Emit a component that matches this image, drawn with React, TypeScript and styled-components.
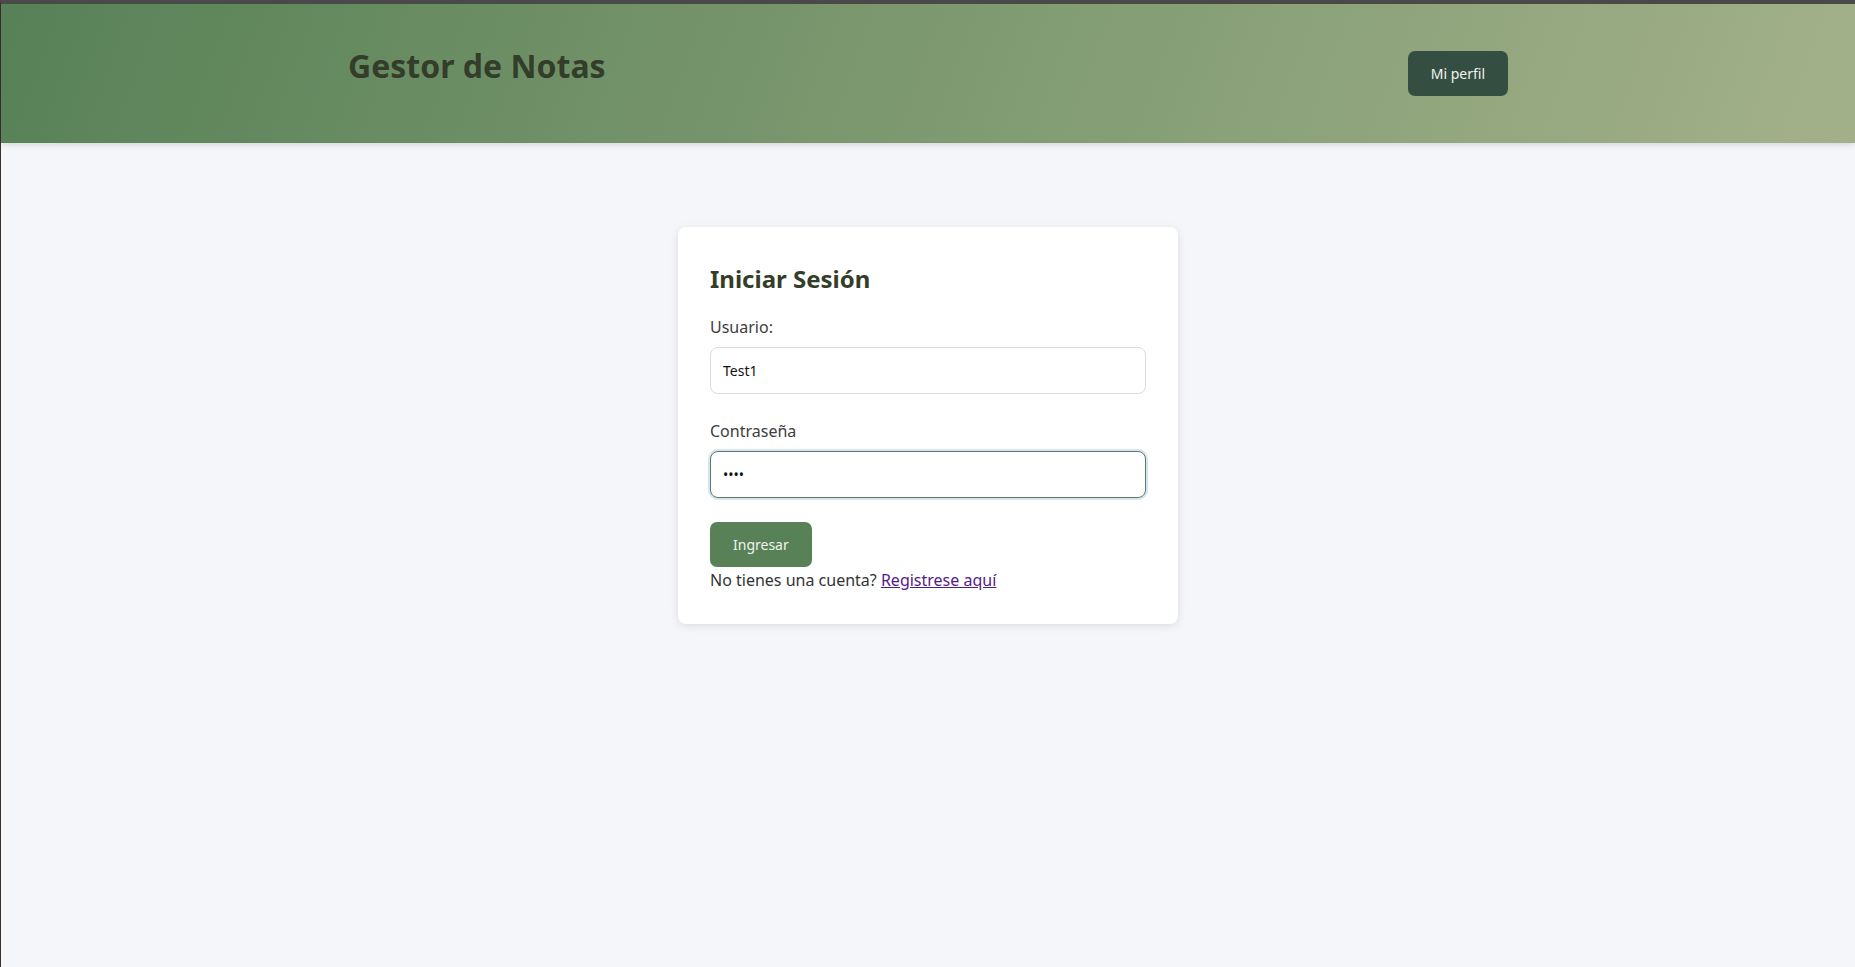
import React from "react";
import styled, { createGlobalStyle } from "styled-components";

const GlobalStyle = createGlobalStyle`
  html, body { margin: 0; padding: 0; }
  body {
    font-family: "Noto Sans", "Open Sans", sans-serif;
    background: #f5f6fa;
  }
  * { box-sizing: border-box; }
`;

const Frame = styled.div`
  min-height: 100vh;
  border-top: 4px solid #4b4b4b;
  border-left: 1px solid #3a302e;
  background: #f5f6fa;
  display: flex;
  flex-direction: column;
`;

const Header = styled.header`
  height: 139px;
  background: linear-gradient(110deg, #588157 0%, #a3b18a 100%);
  box-shadow: 0 2px 6px rgba(0, 0, 0, 0.12);
  display: flex;
  justify-content: center;
  position: relative;
  z-index: 1;
`;

const HeaderInner = styled.div`
  width: 1160px;
  display: flex;
  align-items: center;
  justify-content: space-between;
`;

const Title = styled.h1`
  margin: 0 0 17px 0;
  font-size: 32px;
  font-weight: 700;
  color: #333d29;
`;

const Button = styled.button<{ $tone: "dark" | "green" }>`
  font-family: "Noto Sans", sans-serif;
  font-size: 14px;
  line-height: 21px;
  padding: 12px 23px;
  border: none;
  border-radius: 7px;
  color: #f1f3ee;
  background: ${(p) => (p.$tone === "dark" ? "#344e41" : "#588157")};
  cursor: pointer;
`;

const Main = styled.main`
  flex: 1;
  display: flex;
  justify-content: center;
  align-items: flex-start;
  padding-top: 84px;
`;

const Card = styled.div`
  width: 500px;
  background: #ffffff;
  border-radius: 8px;
  box-shadow: 0 2px 8px rgba(0, 0, 0, 0.1);
  padding: 32px 32px 33px;
`;

const CardTitle = styled.h2`
  margin: 3px 0 21px 0;
  font-size: 24px;
  font-weight: 700;
  color: #333d29;
`;

const Field = styled.div<{ $gap: number }>`
  display: flex;
  flex-direction: column;
  margin-bottom: ${(p) => p.$gap}px;
`;

const Label = styled.label`
  font-size: 16px;
  color: #3d3d3d;
  margin-bottom: 9px;
`;

const Input = styled.input<{ $focused?: boolean }>`
  width: 100%;
  font-family: "Noto Sans", sans-serif;
  font-size: 14px;
  line-height: 21px;
  padding: 12px 12px;
  border-radius: 8px;
  color: #111;
  border: 1px solid ${(p) => (p.$focused ? "#588157" : "#dddddd")};
  box-shadow: ${(p) => (p.$focused ? "0 0 0 2px #dde1f6" : "none")};
  outline: none;
  background: #fff;
`;

const Footer = styled.p`
  margin: 2px 0 0 0;
  font-size: 16px;
  color: #333333;
`;

const Link = styled.a`
  color: #551a8b;
  text-decoration: underline;
`;

export default function App() {
  return (
    <>
      <GlobalStyle />
      <Frame>
        <Header>
          <HeaderInner>
            <Title>Gestor de Notas</Title>
            <Button $tone="dark">Mi perfil</Button>
          </HeaderInner>
        </Header>
        <Main>
          <Card>
            <CardTitle>Iniciar Sesión</CardTitle>
            <Field $gap={26}>
              <Label>Usuario:</Label>
              <Input type="text" defaultValue="Test1" />
            </Field>
            <Field $gap={24}>
              <Label>Contraseña</Label>
              <Input type="password" defaultValue="abcd" $focused />
            </Field>
            <Button $tone="green">Ingresar</Button>
            <Footer>
              No tienes una cuenta? <Link href="#">Registrese aquí</Link>
            </Footer>
          </Card>
        </Main>
      </Frame>
    </>
  );
}
